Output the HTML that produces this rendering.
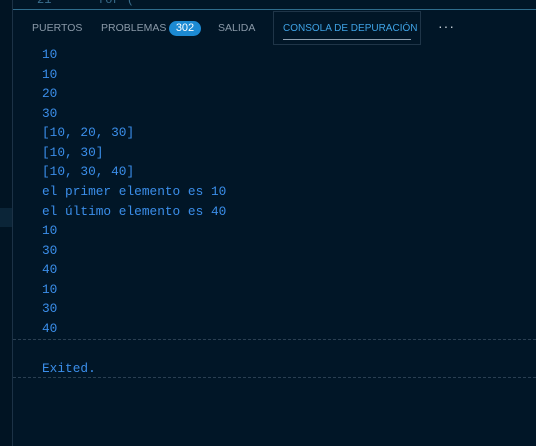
<!DOCTYPE html>
<html><head><style>
html,body{margin:0;padding:0;width:536px;height:446px;overflow:hidden;background:#011627;}
#strip{position:absolute;left:0;top:0;width:12px;height:446px;background:#011423;border-right:1px solid #1c3246;}
#hl{position:absolute;left:0;top:208px;width:12px;height:19px;background:#0b2538;}
#ed{position:absolute;left:13px;top:0;width:523px;height:10px;background:#011627;overflow:hidden;}
#ed span{position:absolute;top:-7px;font:12px "Liberation Mono",monospace;color:#3b6f8e;}
#topb{position:absolute;left:13px;top:9px;width:523px;height:1px;background:#2f6c8c;}
#tabs{position:absolute;left:0;top:10px;width:536px;height:36px;font:10.5px "Liberation Sans",sans-serif;color:#8a99a8;white-space:nowrap;}
.t{position:absolute;top:12px;}
#badge{position:absolute;left:169px;top:11px;width:32px;height:15px;border-radius:8px;background:#1c8ad3;color:#fff;font-size:11px;text-align:center;line-height:15px;}
#act{position:absolute;left:273px;top:1px;width:146px;height:32px;border:1px solid #1f3548;}
#act span{position:absolute;left:9px;top:11px;color:#3fa3e6;font-size:10px;}
#act i{position:absolute;left:9px;top:27px;width:128px;height:1px;background:#8fa0b0;}
#out{position:absolute;left:42px;top:45px;font:12.8px/19.57px "Liberation Mono","DejaVu Sans Mono",monospace;color:#3b8eea;white-space:pre;}
.dash{position:absolute;left:13px;width:523px;border-top:1px dashed #2a3f52;}
#ex{position:absolute;left:42px;top:361px;font:12.8px "Liberation Mono",monospace;color:#3b8eea;}
</style></head><body>
<div id="strip"></div><div id="hl"></div>
<div id="ed"><span style="left:24px">21</span><span style="left:85px">for (</span></div>
<div id="topb"></div>
<div id="tabs">
<span class="t" style="left:32px">PUERTOS</span>
<span class="t" style="left:101px">PROBLEMAS</span>
<div id="badge">302</div>
<span class="t" style="left:218px">SALIDA</span>
<div id="act"><span>CONSOLA DE DEPURACIÓN</span><i></i></div>
<span class="t" style="left:438px;top:8px;font-size:14px;color:#c8d0d8;letter-spacing:1px">···</span>
</div>
<div id="out">10
10
20
30
[10, 20, 30]
[10, 30]
[10, 30, 40]
el primer elemento es 10
el último elemento es 40
10
30
40
10
30
40</div>
<div class="dash" style="top:339px"></div>
<div id="ex">Exited.</div>
<div class="dash" style="top:377px"></div>
</body></html>
